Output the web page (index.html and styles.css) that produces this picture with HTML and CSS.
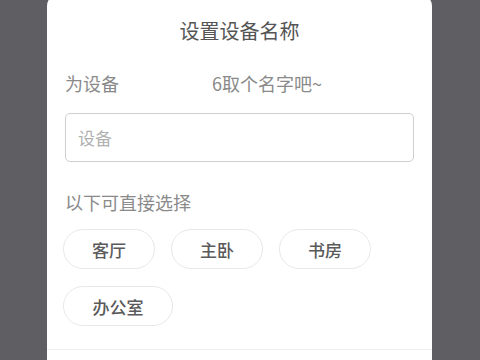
FILE: index.html
```html
<!DOCTYPE html>
<html lang="zh-CN">
<head>
  <meta charset="UTF-8">
  <meta name="viewport" content="width=device-width, initial-scale=1.0">
  <title>设置设备名称</title>
  <link rel="stylesheet" href="styles.css">
</head>
<body>

  <div class="dialog">
    <div class="dialog-title">设置设备名称</div>
    <div class="hint-row">
      <span>为设备</span>
      <span class="hint-name">6取个名字吧~</span>
    </div>
    <input type="text" class="name-input" placeholder="设备">
    <div class="section-label">以下可直接选择</div>
    <div class="chip-list">
      <button class="chip">客厅</button>
      <button class="chip">主卧</button>
      <button class="chip">书房</button>
      <button class="chip wide">办公室</button>
    </div>
    <div class="dialog-footer"></div>
  </div>

</body>
</html>
```

FILE: styles.css
```css
html, body {
  height: 100%;
}
body {
  margin: 0;
  background-color: #5f5e63;
  font-family: "Noto Sans CJK SC", "Noto Sans", sans-serif;
  overflow: hidden;
}
.dialog {
  width: 385px;
  height: 366px;
  margin: -6px 0 0 47px;
  background-color: #fff;
  border-radius: 12px 12px 0 0;
  padding: 23px 18px 0 18px;
  box-sizing: border-box;
}
.dialog-title {
  text-align: center;
  font-size: 20px;
  line-height: 28px;
  color: #555;
}
.hint-row {
  margin-top: 26px;
  font-size: 18px;
  line-height: 24px;
  color: #8a8a8a;
  display: flex;
}
.hint-name {
  margin-left: 93px;
}
.name-input {
  display: block;
  width: 100%;
  height: 49px;
  margin-top: 18px;
  box-sizing: border-box;
  border: 1.5px solid #cfcfcf;
  border-radius: 5px;
  padding: 0 12px;
  font-family: inherit;
  font-size: 17px;
  outline: none;
}
.name-input::placeholder {
  color: #b0b0b0;
}
.section-label {
  margin-top: 28px;
  font-size: 18px;
  line-height: 24px;
  color: #8a8a8a;
}
.chip-list {
  margin-top: 15px;
  margin-left: -2px;
  display: flex;
  flex-wrap: wrap;
  gap: 17px 16px;
  width: 320px;
}
.chip {
  width: 92px;
  height: 40px;
  border: 1.5px solid #e8e8e8;
  border-radius: 20px;
  background-color: #fff;
  font-family: inherit;
  font-size: 17px;
  font-weight: 500;
  color: #5a5a5a;
  padding: 0;
}
.chip.wide {
  width: 110px;
}
.dialog-footer {
  margin: 23px -18px 0 -18px;
  border-top: 1px solid #eeeeee;
}
```
